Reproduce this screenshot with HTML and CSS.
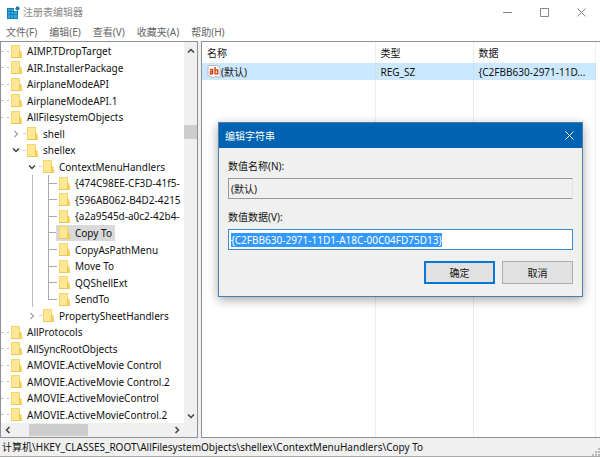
FILE: index.html
```html
<!DOCTYPE html>
<html lang="zh-CN">
<head>
<meta charset="utf-8">
<title>注册表编辑器</title>
<link rel="stylesheet" href="styles.css">
</head>
<body>
<svg class="defs" aria-hidden="true">
  <symbol id="folder" viewBox="0 0 11 13">
    <path d="M0 0h9v6h1l1 6v1H0z" fill="#f5d66c"/>
    <path d="M1 1h7v11H1z" fill="#ffe794"/>
    <path d="M8 6h2l1 6v1H8z" fill="#f3cd55"/>
    <path d="M0 12h9v1H0z" fill="#e8c65c"/>
  </symbol>
  <symbol id="down" viewBox="0 0 8 8"><path d="M1 2.5l3 3 3-3" fill="none" stroke="#404040" stroke-width="1.5"/></symbol>
  <symbol id="up" viewBox="0 0 8 8"><path d="M1 5.5l3-3 3 3" fill="none" stroke="#404040" stroke-width="1.5"/></symbol>
  <symbol id="left" viewBox="0 0 8 8"><path d="M5.5 1l-3 3 3 3" fill="none" stroke="#404040" stroke-width="1.5"/></symbol>
  <symbol id="right" viewBox="0 0 8 8"><path d="M2.5 1l3 3-3 3" fill="none" stroke="#404040" stroke-width="1.5"/></symbol>
  <symbol id="closed" viewBox="0 0 8 8"><path d="M2.5 1l3 3-3 3" fill="none" stroke="#a0a0a0" stroke-width="1.2"/></symbol>
</svg>
<div class="window">
  <header class="titlebar">
    <svg class="app-icon" viewBox="0 0 13 13" aria-hidden="true">
      <path d="M0 2h7v3h4v8H0z" fill="#1580b8"/>
      <path d="M1 3h2v2H1zM4 3h2v2H4zM1 6h2v2H1zM4 6h2v2H4zM7 6h3v2H7zM1 9h2v3H1zM4 9h2v3H4zM7 9h3v3H7z" fill="#35a7dc"/>
      <path d="M10 0l3 2-2 3-3-2z" fill="#1476aa"/>
    </svg>
    <h1>注册表编辑器</h1>
    <div class="window-buttons">
      <button type="button" aria-label="最小化"><svg viewBox="0 0 9 9"><path d="M0 4.5h9"/></svg></button>
      <button type="button" aria-label="最大化"><svg viewBox="0 0 9 9"><path d="M.5.5h8v8h-8z"/></svg></button>
      <button type="button" aria-label="关闭"><svg viewBox="0 0 9 9"><path d="M.5.5l8 8M8.500.5l-8 8"/></svg></button>
    </div>
  </header>
  <nav class="menu">
    <button type="button">文件(F)</button>
    <button type="button">编辑(E)</button>
    <button type="button">查看(V)</button>
    <button type="button">收藏夹(A)</button>
    <button type="button">帮助(H)</button>
  </nav>
  <main class="panes">
    <section class="tree-pane">
      <ul class="tree">
        <li><i class="stub"></i><span class="key"><svg><use href="#folder"/></svg>AIMP.TDropTarget</span></li>
        <li><i class="stub"></i><span class="key"><svg><use href="#folder"/></svg>AIR.InstallerPackage</span></li>
        <li><i class="stub"></i><span class="key"><svg><use href="#folder"/></svg>AirplaneModeAPI</span></li>
        <li><i class="stub"></i><span class="key"><svg><use href="#folder"/></svg>AirplaneModeAPI.1</span></li>
        <li><i class="stub"></i><span class="key"><svg><use href="#folder"/></svg>AllFilesystemObjects</span></li>
        <li><i class="edge"></i><i class="toggle"><svg><use href="#closed"/></svg></i><span class="key"><svg><use href="#folder"/></svg>shell</span></li>
        <li><i class="edge"></i><i class="toggle"><svg><use href="#down"/></svg></i><span class="key"><svg><use href="#folder"/></svg>shellex</span></li>
        <li><i class="edge"></i><i class="blank"></i><i class="toggle"><svg><use href="#down"/></svg></i><span class="key"><svg><use href="#folder"/></svg>ContextMenuHandlers</span></li>
        <li><i class="edge"></i><i class="blank"></i><i class="line"></i><i class="branch"></i><span class="key"><svg><use href="#folder"/></svg>{474C98EE-CF3D-41f5-</span></li>
        <li><i class="edge"></i><i class="blank"></i><i class="line"></i><i class="branch"></i><span class="key"><svg><use href="#folder"/></svg>{596AB062-B4D2-4215</span></li>
        <li><i class="edge"></i><i class="blank"></i><i class="line"></i><i class="branch"></i><span class="key"><svg><use href="#folder"/></svg>{a2a9545d-a0c2-42b4-</span></li>
        <li><i class="edge"></i><i class="blank"></i><i class="line"></i><i class="branch"></i><span class="key selected"><svg><use href="#folder"/></svg>Copy To</span></li>
        <li><i class="edge"></i><i class="blank"></i><i class="line"></i><i class="branch"></i><span class="key"><svg><use href="#folder"/></svg>CopyAsPathMenu</span></li>
        <li><i class="edge"></i><i class="blank"></i><i class="line"></i><i class="branch"></i><span class="key"><svg><use href="#folder"/></svg>Move To</span></li>
        <li><i class="edge"></i><i class="blank"></i><i class="line"></i><i class="branch"></i><span class="key"><svg><use href="#folder"/></svg>QQShellExt</span></li>
        <li><i class="edge"></i><i class="blank"></i><i class="line"></i><i class="branch last"></i><span class="key"><svg><use href="#folder"/></svg>SendTo</span></li>
        <li><i class="edge"></i><i class="blank"></i><i class="toggle"><svg><use href="#closed"/></svg></i><span class="key"><svg><use href="#folder"/></svg>PropertySheetHandlers</span></li>
        <li><i class="stub"></i><span class="key"><svg><use href="#folder"/></svg>AllProtocols</span></li>
        <li><i class="stub"></i><span class="key"><svg><use href="#folder"/></svg>AllSyncRootObjects</span></li>
        <li><i class="stub"></i><span class="key"><svg><use href="#folder"/></svg>AMOVIE.ActiveMovie Control</span></li>
        <li><i class="stub"></i><span class="key"><svg><use href="#folder"/></svg>AMOVIE.ActiveMovie Control.2</span></li>
        <li><i class="stub"></i><span class="key"><svg><use href="#folder"/></svg>AMOVIE.ActiveMovieControl</span></li>
        <li><i class="stub"></i><span class="key"><svg><use href="#folder"/></svg>AMOVIE.ActiveMovieControl.2</span></li>
      </ul>
      <div class="vscroll"><svg><use href="#up"/></svg><div class="track"><div class="thumb"></div></div><svg><use href="#down"/></svg></div>
      <div class="hscroll"><svg><use href="#left"/></svg><div class="track"><div class="thumb"></div></div><svg><use href="#right"/></svg></div>
    </section>
    <section class="value-pane">
      <table>
        <colgroup><col class="c-name"><col class="c-type"><col class="c-data"><col></colgroup>
        <thead><tr><th>名称</th><th>类型</th><th>数据</th><td></td></tr></thead>
        <tbody>
          <tr class="current">
            <td><span class="value-name"><svg class="value-icon" viewBox="0 0 14 13" aria-hidden="true">
              <path d="M1 .5h9l3 2v10l-4-1-4 1-4-2z" fill="#fff" stroke="#b9b9b9"/>
              <g fill="none" stroke="#d9481c" stroke-width="1.5"><path d="M3 4.500h2.500v4.500M5.500 6.500h-2v2.500h2M8 2v7.200M8 5h2.700v3.800H8"/></g>
            </svg>(默认)</span></td>
            <td>REG_SZ</td><td>{C2FBB630-2971-11D...</td><td></td>
          </tr>
          <tr class="rest"><td></td><td></td><td></td><td></td></tr>
        </tbody>
      </table>
    </section>
  </main>
  <footer class="status">
    <span>计算机\HKEY_CLASSES_ROOT\AllFilesystemObjects\shellex\ContextMenuHandlers\Copy To</span>
    <svg class="grip" viewBox="0 0 8 8" aria-hidden="true"><path d="M6 0h2v2H6zM3 3h2v2H3zM6 3h2v2H6zM0 6h2v2H0zM3 6h2v2H3zM6 6h2v2H6z" fill="#bbb"/></svg>
  </footer>
  <form class="dialog" role="dialog" aria-labelledby="dialog-title">
    <div class="dialog-title">
      <h2 id="dialog-title">编辑字符串</h2>
      <button type="button" aria-label="关闭"><svg viewBox="0 0 9 9"><path d="M.5.5l8 8M8.500.5l-8 8"/></svg></button>
    </div>
    <div class="dialog-body">
      <label for="value-name">数值名称(N):</label>
      <input id="value-name" class="readonly" type="text" value="(默认)" readonly>
      <label for="value-data">数值数据(V):</label>
      <input id="value-data" class="editing" type="text" value="{C2FBB630-2971-11D1-A18C-00C04FD75D13}" autofocus>
      <div class="actions">
        <button type="button" class="primary">确定</button>
        <button type="button">取消</button>
      </div>
    </div>
  </form>
</div>
<script src="script.js"></script>
</body>
</html>
```
FILE: script.js
```js
const field = document.getElementById('value-data');
field.focus();
field.select();
```
FILE: styles.css
```css
* { box-sizing: border-box; }
body {
  margin: 0;
  background: #fff;
  color: #111;
  font: 10px/16px "Noto Sans", "Noto Sans CJK SC", sans-serif;
}
button, input { font: inherit; color: inherit; margin: 0; }
h1, h2 { margin: 0; font-size: 10px; font-weight: 400; }
.defs { position: absolute; width: 0; height: 0; }
.window {
  position: relative;
  display: flex;
  flex-direction: column;
  height: 100vh;
  overflow: hidden;
}
.titlebar { display: flex; align-items: center; height: 24px; padding-left: 7px; flex: none; }
.app-icon { width: 13px; height: 13px; margin-right: 3px; }
.titlebar h1 { color: #888; }
.window-buttons { display: flex; margin-left: auto; }
.window-buttons button { width: 37px; height: 24px; padding: 0; border: 0; background: none; }
.window-buttons svg, .dialog-title svg { display: block; width: 9px; height: 9px; margin: auto; fill: none; stroke: #888; }
.menu { display: flex; gap: 12px; padding: 0 6px 1px; flex: none; }
.menu button { padding: 0; border: 0; background: none; color: #666; }
.panes { flex: 1; min-height: 0; display: grid; grid-template-columns: 33% 1fr; gap: 3px; background: #f0f0f0; }
.tree-pane {
  display: grid;
  grid-template: minmax(0, 1fr) 14px / minmax(0, 1fr) 13px;
  min-height: 0;
  border: 1px solid #8a8f99;
  background: #fff;
}
.tree { display: grid; grid-auto-rows: minmax(0, 1fr); margin: 0; padding: 1px 0 0; list-style: none; overflow: hidden; }
.tree li { display: flex; align-items: stretch; white-space: nowrap; }
.tree i { flex: none; width: 16px; }
.tree .stub, .tree .edge { width: 10px; }
.stub { align-self: center; height: 1px; background: linear-gradient(90deg, #bbb 2px, transparent 2px 6px, #bbb 6px 8px, transparent 8px); }
.toggle { display: flex; align-items: center; background: linear-gradient(#ccc, #ccc) 12px 50% / 3px 1px no-repeat; }
.toggle svg { width: 10px; height: 8px; }
.line { background: linear-gradient(#bbb, #bbb) 5px 0 / 1px 100% no-repeat; }
.branch { background: linear-gradient(#aaa, #aaa) 5px 0 / 1px 100% no-repeat, linear-gradient(#aaa, #aaa) 5px 50% / 9px 1px no-repeat; }
.branch.last { background-size: 1px 50%, 9px 1px; }
.key { display: flex; align-items: center; margin-left: -3px; padding: 0 3px; }
.key svg { width: 11px; height: 13px; margin-right: 5px; }
.selected { background: #d9d9d9; }
.vscroll, .hscroll { display: flex; align-items: center; background: #f0f0f0; }
.vscroll { flex-direction: column; padding: 5px 0 3px; }
.hscroll { grid-column: 1 / -1; padding: 0 16px 0 3px; }
.vscroll svg, .hscroll svg { width: 8px; height: 8px; flex: none; }
.vscroll .track { flex: 1; width: 100%; padding-top: 70px; }
.vscroll .thumb { height: 14px; background: #cdcdcd; }
.hscroll .track { flex: 1; padding-left: 17px; }
.hscroll .thumb { width: 41%; height: 12px; background: #cdcdcd; }
.value-pane { border: 1px solid #8a8f99; border-right: 0; background: #fff; min-width: 0; }
.value-pane table { width: 100%; height: 100%; table-layout: fixed; border-collapse: collapse; }
.c-name { width: 173px; }
.c-type { width: 98px; }
.c-data { width: 122px; }
.value-pane th, .value-pane td { padding: 0 0 0 5px; text-align: left; font-weight: 400; border-right: 1px solid #eee; white-space: nowrap; }
.value-pane th:last-child, .value-pane td:last-child { border: 0; padding: 0; }
.value-pane thead tr { height: 21px; }
.current { height: 17px; }
.current td:not(:last-child) { background: #cce8ff; border-color: #c2e0f8; }
.value-name { display: flex; align-items: center; }
.value-icon { width: 14px; height: 13px; }
.status { display: flex; align-items: center; height: 19px; padding-left: 2px; border-bottom: 1px solid #aaa; background: #f0f0f0; flex: none; white-space: nowrap; }
.grip { width: 8px; height: 8px; margin-left: auto; align-self: flex-end; }
.dialog {
  position: absolute;
  left: 218px;
  right: 17px;
  top: 122px;
  border: 1px solid #4a7eb0;
  background: #f0f0f0;
  box-shadow: 0 3px 10px rgba(0, 0, 0, .35);
}
.dialog-title { display: flex; align-items: center; justify-content: space-between; height: 25px; padding: 0 6px; background: #0063b1; color: #fff; }
.dialog-title button { width: 13px; height: 13px; padding: 0; border: 0; background: none; }
.dialog-title svg { stroke: #fff; }
.dialog-body { display: flex; flex-direction: column; padding: 10px 9px 12px; }
.dialog-body label { margin-bottom: 4px; }
.dialog-body input { width: 100%; height: 21px; padding: 0 2px; border: 1px solid #999; border-radius: 0; outline: 0; }
.dialog-body .readonly { margin-bottom: 10px; border-right-color: #e2e2e2; background: #f0f0f0; }
.dialog-body .editing { border-color: #3c8ad0; background: #fff; }
.editing::selection { background: #3399ff; color: #fff; }
.actions { display: flex; justify-content: flex-end; gap: 7px; margin-top: 11px; }
.actions button { width: 71px; height: 23px; padding: 0; border: 1px solid #adadad; background: #e1e1e1; }
.actions .primary { border: 2px solid #0078d7; }
```
